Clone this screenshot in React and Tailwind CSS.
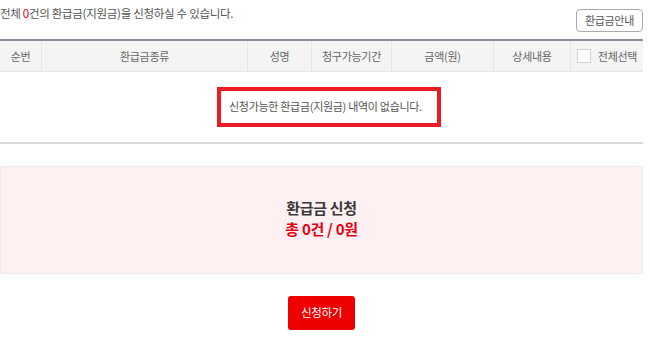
export default function App() {
  const cols = [
    { label: "순번", w: "w-[42px]" },
    { label: "환급금종류", w: "w-[206px]" },
    { label: "성명", w: "w-[64px]" },
    { label: "청구가능기간", w: "w-[80px]" },
    { label: "금액(원)", w: "w-[102px]" },
    { label: "상세내용", w: "w-[77px]" },
  ];

  return (
    <div
      className="w-[643px] bg-white text-[#333]"
      style={{ fontFamily: '"Noto Sans CJK KR", "Noto Sans", sans-serif' }}
    >
      {/* top info */}
      <div className="flex items-center justify-between h-[39px] pb-[4px]">
        <p className="text-[11.5px] tracking-[-0.3px] text-[#555] -mt-[7px]">
          전체 <span className="text-[#e60012]">0</span>건의 환급금(지원금)을 신청하실 수 있습니다.
        </p>
        <button className="h-[23px] px-[8px] mt-[6px] text-[11px] tracking-[-0.3px] text-[#555] border border-[#aaa] rounded-[4px] bg-white">
          환급금안내
        </button>
      </div>

      {/* table header */}
      <div className="flex h-[33px] border-t-2 border-[#8c8c9a] bg-[#f4f4f4] border-b border-b-[#e6e6e6]">
        {cols.map((c) => (
          <div
            key={c.label}
            className={`${c.w} flex items-center justify-center text-[11px] tracking-[-0.3px] text-[#666] border-r border-[#e6e6e6]`}
          >
            {c.label}
          </div>
        ))}
        <div className="flex-1 flex items-center justify-center gap-[7px] text-[11px] tracking-[-0.3px] text-[#666]">
          <span className="w-[14px] h-[14px] border border-[#d4d4d4] bg-white" />
          전체선택
        </div>
      </div>

      {/* empty row */}
      <div className="h-[72px] flex items-center pl-[217px] border-b-2 border-[#dcdcdc]">
        <div className="w-[224px] h-[40px] -mt-[1px] border-[4px] border-[#ec1c24] flex items-center pl-[8px] text-[11px] tracking-[-0.3px] text-[#555]">
          신청가능한 환급금(지원금) 내역이 없습니다.
        </div>
      </div>

      {/* summary */}
      <div className="mt-[22px] h-[108px] bg-[#fff1f1] border border-[#ececec] flex flex-col items-center justify-center font-bold text-[15px] tracking-[-0.3px]">
        <p className="text-[#3a3a3a] leading-[21px] -mt-[4px]">환급금 신청</p>
        <p className="text-[#e60012] leading-[21px]">총 0건 / 0원</p>
      </div>

      {/* action */}
      <div className="flex justify-center pt-[22px]">
        <button className="w-[67px] h-[34px] rounded-[3px] bg-[#ee0000] text-white text-[11.5px] tracking-[-0.3px]">
          신청하기
        </button>
      </div>
    </div>
  );
}
